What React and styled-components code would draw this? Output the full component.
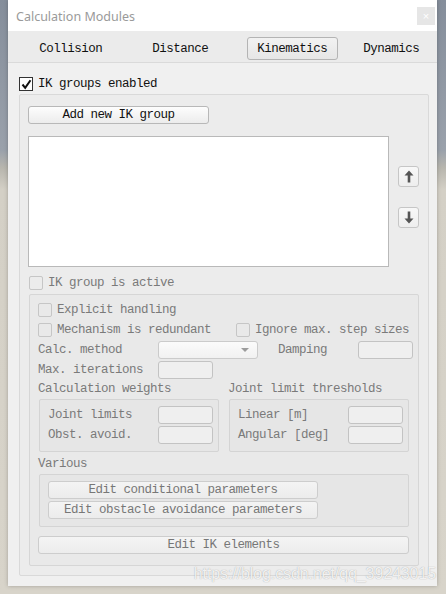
import React from 'react';
import styled, { createGlobalStyle, css } from 'styled-components';

const GlobalStyle = createGlobalStyle`
  html, body {
    margin: 0;
    padding: 0;
    height: 594px;
    overflow: hidden;
  }
  body {
    background: linear-gradient(to bottom, #858e9b 0, #9aa1ab 150px, #b8b6ae 168px, #d4d0c6 190px, #d8d4ca 100%);
    font-family: "Liberation Mono", "DejaVu Sans Mono", monospace;
  }
  * { box-sizing: border-box; }
`;

const Page = styled.div`
  position: relative;
  width: 446px;
  height: 594px;
  padding-left: 8px;
`;

const Window = styled.div`
  width: 429px;
  height: 586px;
  background: #f0f0f0;
  display: flex;
  flex-direction: column;
  box-shadow: 0 0 4px rgba(0, 0, 0, 0.25);
`;

const TitleBar = styled.div`
  height: 31px;
  background: #ffffff;
  display: flex;
  align-items: center;
  justify-content: space-between;
  padding: 1px 2px 0 8px;
`;

const Title = styled.span`
  font-family: "Noto Sans", "Liberation Sans", sans-serif;
  font-size: 12.5px;
  color: #9a9a9a;
`;

const CloseBox = styled.span`
  width: 18px;
  height: 18px;
  background: #e6e6e6;
  color: #ffffff;
  font-family: "Liberation Sans", sans-serif;
  font-size: 11px;
  display: flex;
  align-items: center;
  justify-content: center;
`;

const TabBar = styled.div`
  height: 32px;
  background: #ebebeb;
  border-bottom: 1px solid #dadada;
  display: flex;
  align-items: center;
  padding-top: 3px;
`;

const Tab = styled.div`
  width: ${p => p.$w}px;
  margin-left: ${p => p.$ml}px;
  height: 23px;
  padding-top: 2px;
  display: flex;
  align-items: center;
  justify-content: center;
  font-size: 12.5px;
  letter-spacing: -0.5px;
  color: #111;
  border-radius: 3px;
  border: 1px solid transparent;
  ${p => p.$active && css`
    border-color: #b4b4b4;
    background: linear-gradient(to bottom, #f2f2f2, #e6e6e6);
  `}
`;

const Pane = styled.div`
  flex: 1;
  padding: 14px 8px 10px 11px;
  display: flex;
  flex-direction: column;
`;

const CheckRow = styled.div`
  height: 14px;
  display: flex;
  align-items: center;
  gap: 5px;
  width: ${p => (p.$w ? `${p.$w}px` : 'auto')};
  margin-left: ${p => p.$ml || 0}px;
  margin-top: ${p => p.$mt || 0}px;
`;

const Box = styled.span`
  width: 14px;
  height: 14px;
  flex: none;
  display: flex;
  align-items: center;
  justify-content: center;
  background: ${p => (p.$disabled ? 'transparent' : '#ffffff')};
  border: 1px solid ${p => (p.$disabled ? '#c6c6c6' : '#333333')};
  border-radius: ${p => (p.$disabled ? '2px' : '0')};
`;

const Text = styled.span`
  font-size: 12.5px;
  letter-spacing: -0.5px;
  line-height: 18px;
  white-space: nowrap;
  color: ${p => (p.$disabled ? '#7a7a7a' : '#111111')};
`;

const OuterGroup = styled.div`
  margin-top: 3px;
  height: 482px;
  border: 1px solid #d9d9d9;
  border-radius: 2px;
  background: #ececec;
  padding: 11px 9px 9px 9px;
  display: flex;
  flex-direction: column;
`;

const Button = styled.div`
  width: ${p => (p.$w ? `${p.$w}px` : 'auto')};
  height: 18px;
  margin-left: ${p => p.$ml || 0}px;
  margin-top: ${p => p.$mt || 0}px;
  display: flex;
  align-items: center;
  justify-content: center;
  font-size: 12.5px;
  letter-spacing: -0.5px;
  color: ${p => (p.$disabled ? '#777777' : '#111111')};
  border: 1px solid ${p => (p.$disabled ? '#cdcdcd' : '#b8b8b8')};
  border-radius: 3px;
  background: ${p => (p.$disabled
    ? 'linear-gradient(to bottom, #f4f4f4, #ececec)'
    : 'linear-gradient(to bottom, #fdfdfd, #ececec)')};
`;

const ListRow = styled.div`
  margin-top: 12px;
  display: flex;
  margin-left: -1px;
`;

const ListBox = styled.div`
  width: 361px;
  height: 131px;
  background: #ffffff;
  border: 1px solid #b9b9b9;
`;

const ArrowColumn = styled.div`
  margin-left: 9px;
  padding-top: 30px;
  display: flex;
  flex-direction: column;
  gap: 20px;
`;

const ArrowButton = styled.div`
  width: 21px;
  height: 21px;
  display: flex;
  align-items: center;
  justify-content: center;
  border: 1px solid #c6c6c6;
  border-radius: 3px;
  background: linear-gradient(to bottom, #f8f8f8, #eeeeee);
`;

const InnerGroup = styled.div`
  margin-top: 4px;
  height: 272px;
  border: 1px solid #d6d6d6;
  border-radius: 2px;
  background: #e9e9e9;
  padding: 8px 9px 11px 8px;
  display: flex;
  flex-direction: column;
`;

const Row = styled.div`
  display: flex;
  align-items: center;
  height: ${p => p.$h || 18}px;
  margin-top: ${p => p.$mt || 0}px;
`;

const Label = styled(Text)`
  width: ${p => p.$w}px;
  flex: none;
`;

const Field = styled.div`
  width: 55px;
  height: 18px;
  flex: none;
  border: 1px solid #c3c3c3;
  border-radius: 3px;
  background: #efefef;
`;

const Combo = styled.div`
  width: 100px;
  height: 18px;
  flex: none;
  border: 1px solid #cbcbcb;
  border-radius: 3px;
  background: linear-gradient(to bottom, #fbfbfb, #f1f1f1);
  display: flex;
  align-items: center;
  justify-content: flex-end;
  padding-right: 8px;
`;

const Caret = styled.span`
  width: 0;
  height: 0;
  border-left: 4px solid transparent;
  border-right: 4px solid transparent;
  border-top: 4px solid #9c9c9c;
`;

const SubRow = styled.div`
  display: flex;
  gap: 10px;
  margin-left: 1px;
  margin-top: 1px;
`;

const SubGroup = styled.div`
  width: ${p => p.$w || 180}px;
  height: 53px;
  border: 1px solid #d4d4d4;
  border-radius: 2px;
  background: #e6e6e6;
  padding: 6px 5px 7px 8px;
  display: flex;
  flex-direction: column;
  gap: 2px;
`;

const FieldRow = styled.div`
  display: flex;
  align-items: center;
  height: 18px;
`;

const Watermark = styled.div`
  position: absolute;
  right: 10px;
  top: 565px;
  font-family: "Liberation Sans", "Noto Sans", sans-serif;
  font-size: 16px;
  color: rgba(255, 255, 255, 0.85);
  text-shadow: 0 0 1px rgba(90, 90, 90, 0.55);
  letter-spacing: -0.1px;
`;

const Check = () => (
  <svg width="11" height="11" viewBox="0 0 11 11">
    <path d="M1.5 5.5 L4.2 8.8 L9.5 1.2" fill="none" stroke="#111" strokeWidth="2" />
  </svg>
);

const Arrow = ({ down }) => (
  <svg width="10" height="13" viewBox="0 0 10 13" style={down ? { transform: 'rotate(180deg)' } : undefined}>
    <path d="M5 0.5 L9.5 5.5 L6.3 5.5 L6.3 12.5 L3.7 12.5 L3.7 5.5 L0.5 5.5 Z" fill="#555555" />
  </svg>
);

const CheckBox = ({ label, checked, disabled, w, ml, mt }) => (
  <CheckRow $w={w} $ml={ml} $mt={mt}>
    <Box $disabled={disabled}>{checked && <Check />}</Box>
    <Text $disabled={disabled}>{label}</Text>
  </CheckRow>
);

export default function App() {
  return (
    <Page>
      <GlobalStyle />
      <Window>
        <TitleBar>
          <Title>Calculation Modules</Title>
          <CloseBox>×</CloseBox>
        </TitleBar>
        <TabBar>
          <Tab $w={92} $ml={17}>Collision</Tab>
          <Tab $w={92} $ml={18}>Distance</Tab>
          <Tab $w={91} $ml={21} $active>Kinematics</Tab>
          <Tab $w={92} $ml={8}>Dynamics</Tab>
        </TabBar>
        <Pane>
          <CheckBox label="IK groups enabled" checked />
          <OuterGroup>
            <Button $w={181} $ml={-1}>Add new IK group</Button>
            <ListRow>
              <ListBox />
              <ArrowColumn>
                <ArrowButton><Arrow /></ArrowButton>
                <ArrowButton><Arrow down /></ArrowButton>
              </ArrowColumn>
            </ListRow>
            <CheckBox label="IK group is active" disabled mt={9} />
            <InnerGroup>
              <CheckBox label="Explicit handling" disabled />
              <Row $h={14} $mt={6}>
                <CheckBox label="Mechanism is redundant" disabled w={200} />
                <CheckBox label="Ignore max. step sizes" disabled />
              </Row>
              <Row $mt={4}>
                <Label $w={120} $disabled>Calc. method</Label>
                <Combo><Caret /></Combo>
                <Label $w={80} $disabled style={{ marginLeft: 20 }}>Damping</Label>
                <Field />
              </Row>
              <Row $mt={2}>
                <Label $w={120} $disabled>Max. iterations</Label>
                <Field />
              </Row>
              <Row $mt={1}>
                <Label $w={190} $disabled>Calculation weights</Label>
                <Label $w={180} $disabled>Joint limit thresholds</Label>
              </Row>
              <SubRow>
                <SubGroup>
                  <FieldRow>
                    <Label $w={110} $disabled>Joint limits</Label>
                    <Field />
                  </FieldRow>
                  <FieldRow>
                    <Label $w={110} $disabled>Obst. avoid.</Label>
                    <Field />
                  </FieldRow>
                </SubGroup>
                <SubGroup>
                  <FieldRow>
                    <Label $w={110} $disabled>Linear [m]</Label>
                    <Field />
                  </FieldRow>
                  <FieldRow>
                    <Label $w={110} $disabled>Angular [deg]</Label>
                    <Field />
                  </FieldRow>
                </SubGroup>
              </SubRow>
              <Row $mt={3}>
                <Label $w={100} $disabled>Various</Label>
              </Row>
              <SubRow>
                <SubGroup $w={370}>
                  <Button $w={270} $disabled>Edit conditional parameters</Button>
                  <Button $w={270} $disabled>Edit obstacle avoidance parameters</Button>
                </SubGroup>
              </SubRow>
              <Button $w={371} $mt={9} $disabled>Edit IK elements</Button>
            </InnerGroup>
          </OuterGroup>
        </Pane>
      </Window>
      <Watermark>https://blog.csdn.net/qq_39243015</Watermark>
    </Page>
  );
}
